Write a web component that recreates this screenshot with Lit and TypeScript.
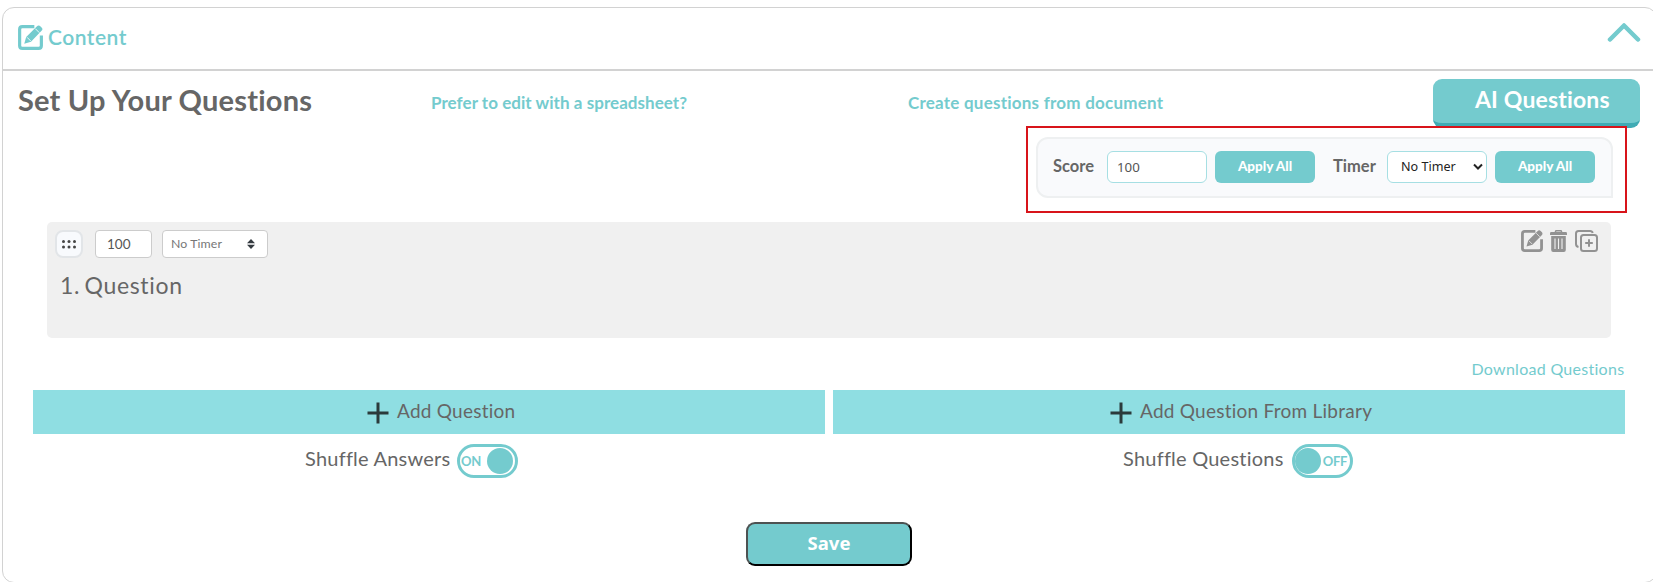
import { LitElement, html, css, svg } from "lit";
import { customElement, property, state } from "lit/decorators.js";
import { classMap } from "lit/directives/class-map.js";

const editIcon = html`<svg viewBox="0 0 26 26" width="100%" height="100%" fill="none">
  <path d="M17 1.700H4.500Q1.700 1.700 1.700 4.500v17q0 2.800 2.800 2.800h17q2.800 0 2.800-2.800V11" stroke="currentColor" stroke-width="3.300"/>
  <path d="M6.500 19.500l2-7L19.500 1.500q2-2.200 4 0l1 1q1.800 1.800 0 3.600L13.500 17.500z" fill="currentColor"/>
  <path d="M9.400 12.800l3.800 3.800M18 3.800l4.200 4.200" stroke="var(--cut, #fff)" stroke-width="0.900"/>
</svg>`;

const trashIcon = html`<svg viewBox="0 0 17 22" width="17" height="22">
  <path d="M5.500 3V1.500Q5.500.700 6.500.700h4q1 0 1 .8V3" fill="none" stroke="currentColor" stroke-width="1.500"/>
  <path d="M0 3.200Q0 2 1.200 2h14.600Q17 2 17 3.200V5H0z" fill="currentColor"/>
  <path d="M1.200 6h14.600v14q0 2-2 2H3.200q-2 0-2-2z" fill="currentColor"/>
  <path d="M5 8.500v10.500M8.500 8.500v10.500M12 8.500v10.500" stroke="#f0f0f0" stroke-width="1.100"/>
</svg>`;

const copyIcon = html`<svg viewBox="0 0 23 22" width="23" height="22" fill="none" stroke="currentColor" stroke-width="2">
  <path d="M3.500 17Q1 16.500 1 14V3.500Q1 1 3.500 1H15q2.200 0 2.700 2"/>
  <rect x="6" y="5" width="16" height="16" rx="2.500"/>
  <path d="M14 9.200v7.600M10.200 13h7.600"/>
</svg>`;

const plusIcon = html`<svg viewBox="0 0 22 22" width="22" height="22">
  <path d="M11 .5v21M.5 11h21" stroke="#2b3a3b" stroke-width="3"/>
</svg>`;

@customElement("toggle-switch")
class ToggleSwitch extends LitElement {
  @property({ type: Boolean }) on = false;
  static styles = css`
    :host { display: block; }
    .track {
      box-sizing: border-box; width: 61px; height: 34px; padding: 0 2px 0 0;
      border: 3px solid #74cbce; border-radius: 17px; background: #fff;
      display: flex; align-items: center; justify-content: space-between;
      color: #74cbce; font: 700 13px/26px Lato, sans-serif;
    }
    .track.off { flex-direction: row-reverse; padding: 0; }
    .knob { width: 26px; height: 26px; border-radius: 50%; background: #74cbce; }
    .word { padding-left: 1px; letter-spacing: -0.3px; }
    .off .word { padding: 0 3px 0 0; letter-spacing: -0.3px; }
  `;
  render() {
    return html`<div class=${classMap({ track: true, off: !this.on })}>
      <span class="word">${this.on ? "ON" : "OFF"}</span><span class="knob"></span>
    </div>`;
  }
}

@customElement("app-root")
class AppRoot extends LitElement {
  @state() private shuffleAnswers = true;
  @state() private shuffleQuestions = false;

  static styles = css`
    :host { display: block; height: 582px; overflow: hidden; background: #fff;
      font-family: Lato, sans-serif; color: #666; white-space: nowrap; font-variant-ligatures: none; }
    * { box-sizing: border-box; }
    svg { display: block; }
    .panel { margin: 7px -4px 0 2px; height: 576px; border: 1px solid #d2d2d2; border-radius: 12px; }
    .header { height: 63px; display: flex; justify-content: space-between; border-bottom: 2px solid #d2d2d2;
      padding: 17px 15px 0 15px; color: #74cbce; }
    .header-title { display: flex; gap: 5px; }
    .header-icon { width: 25px; height: 25px; }
    .header-text { font-size: 21px; font-weight: 600; line-height: 24px; letter-spacing: 0.5px; }
    .chevron { margin: -4px 0 0; }
    .title-row { height: 55px; display: grid; grid-template-columns: 413px 477px 525px 207px; padding: 8px 0 0 15px; }
    .title { font-size: 29px; font-weight: 700; line-height: 41px; letter-spacing: 0.2px; }
    .link { color: #74cbce; font-size: 17px; font-weight: 700; line-height: 48px; }
    .l1 { letter-spacing: 0.050px; }
    .l2 { letter-spacing: 0.230px; }
    .ai { height: 49px; border-radius: 9px; background: #74cbce; border-bottom: 5px solid #3fabb4;
      color: #fff; font-size: 23px; font-weight: 700; line-height: 41px; padding-left: 42px; letter-spacing: 0.150px; }
    .marked { position: relative; width: 601px; height: 87px; margin-left: 1023px; border: 2px solid #d8141a; padding: 9px 9px 9px 8px; }
    .bulk { width: 577px; height: 61px; border: 2px solid #eef0f1; border-radius: 12px 12px 0 12px;
      background: #f9fafc; display: grid; grid-template-columns: 54px 108px 118px 54px 108px 100px; padding: 12px 0 0 15px; }
    .bulk-label { font-size: 16.500px; font-weight: 700; line-height: 30px; }
    .field { width: 100px; height: 32px; border: 1px solid #a6dfe3; border-radius: 6px; background: #fff;
      font: 13.300px/30px "Noto Sans", sans-serif; color: #555; padding: 0 10px 0 9px; }
    .select { display: flex; justify-content: space-between; align-items: center; color: #222; padding: 0 3px 0 13px; font-size: 12.600px; }
    .apply { width: 100px; height: 32px; border-radius: 6px; background: #74cbce; color: #fff; text-align: center;
      font-size: 13.500px; font-weight: 900; line-height: 31px; }
    .card { width: 1564px; height: 116px; margin: 9px 0 0 44px; border-radius: 5px; background: #f0f0f0; padding: 8px 13px 0 8px; }
    .card-tools { display: flex; height: 28px; }
    .grip { width: 28px; height: 28px; border: 2px solid #e2e5e8; border-radius: 8px; background: #f8fafd; }
    .points { width: 57px; height: 28px; margin-left: 12px; border: 1px solid #ccc; border-radius: 4px; background: #fff;
      font-size: 13.500px; line-height: 26px; padding-left: 11px; color: #555; }
    .timer { width: 106px; height: 28px; margin-left: 10px; border: 1px solid #ccc; border-radius: 4px; background: #fff;
      font-size: 12.300px; line-height: 26px; padding: 0 12px 0 8px; color: #777; display: flex; justify-content: space-between; align-items: center; letter-spacing: 0.100px; }
    .actions { margin-left: auto; display: flex; color: #929292; --cut: #f0f0f0; }
    .action-edit { width: 22px; height: 22px; margin-right: 7px; }
    .action-trash { margin-right: 8px; }
    .question { font-size: 23px; line-height: 30px; padding: 12px 0 0 5px; letter-spacing: 0.650px; word-spacing: -2px; }
    .download { margin: 21px 0 0 1468.500px; height: 31px; color: #74cbce; font-size: 16px; line-height: 20px; letter-spacing: 0.280px; }
    .columns { display: grid; grid-template-columns: 792px 792px; gap: 8px; padding-left: 30px; }
    .add { height: 44px; background: #8fdee2; display: flex; font-size: 19px; line-height: 42px; letter-spacing: 0.250px; }
    .add svg { margin: 12px 8px 0 0; }
    .add-one { padding-left: 334px; }
    .add-two { padding-left: 277px; }
    .shuffle { display: flex; margin-top: 10px; font-size: 20px; line-height: 28px; letter-spacing: 0.220px; }
    .shuffle-one { padding-left: 272px; }
    .shuffle-two { padding-left: 290px; }
    .shuffle-one .shuffle-label { width: 152px; }
    .shuffle-two .shuffle-label { width: 169px; }
    .save { width: 166px; height: 44px; margin: 44px 0 0 743px; border: 2px solid; border-color: #4d5252 #000 #000 #4d5252;
      border-radius: 9px; background: #74cbce; color: #fff; text-align: center;
      font: 700 18.500px/37px "Noto Sans", sans-serif; }
  `;

  render() {
    return html`<main class="panel">
      <header class="header">
        <div class="header-title"><span class="header-icon">${editIcon}</span><span class="header-text">Content</span></div>
        <svg class="chevron" width="34" height="22" viewBox="0 0 34 22"><path d="M3 18.500L17 4.500l14 14" fill="none" stroke="#74cbce" stroke-width="4.500" stroke-linecap="round" stroke-linejoin="round"/></svg>
      </header>
      <section class="title-row">
        <span class="title">Set Up Your Questions</span>
        <span class="link l1">Prefer to edit with a spreadsheet?</span>
        <span class="link l2">Create questions from document</span>
        <div class="ai">AI Questions</div>
      </section>
      <section class="marked"><div class="bulk">
        <span class="bulk-label">Score</span><div class="field">100</div><div class="apply">Apply All</div>
        <span class="bulk-label">Timer</span>
        <div class="field select"><span>No Timer</span><svg width="10" height="8" viewBox="0 0 10 8"><path d="M1 1.500l4 4 4-4" fill="none" stroke="#222" stroke-width="2"/></svg></div>
        <div class="apply">Apply All</div>
      </div></section>
      <section class="card">
        <div class="card-tools">
          <div class="grip"><svg width="24" height="24" viewBox="0 0 24 24" fill="#444">${[6.5, 12, 17.5].map(x => [9.5, 15].map(y => svg`<circle cx=${x} cy=${y} r="1.5"/>`))}</svg></div>
          <div class="points">100</div>
          <div class="timer"><span>No Timer</span><svg width="8" height="10" viewBox="0 0 8 10"><path d="M0 4.200L4 0l4 4.200zM0 5.800h8L4 10z" fill="#343a40"/></svg></div>
          <div class="actions"><span class="action-edit">${editIcon}</span><span class="action-trash">${trashIcon}</span>${copyIcon}</div>
        </div>
        <div class="question">1. Question</div>
      </section>
      <div class="download">Download Questions</div>
      <section class="columns">
        <div><div class="add add-one">${plusIcon}<span>Add Question</span></div>
          <div class="shuffle shuffle-one"><span class="shuffle-label">Shuffle Answers</span><toggle-switch ?on=${this.shuffleAnswers}></toggle-switch></div></div>
        <div><div class="add add-two">${plusIcon}<span>Add Question From Library</span></div>
          <div class="shuffle shuffle-two"><span class="shuffle-label">Shuffle Questions</span><toggle-switch ?on=${this.shuffleQuestions}></toggle-switch></div></div>
      </section>
      <div class="save">Save</div>
    </main>`;
  }
}
